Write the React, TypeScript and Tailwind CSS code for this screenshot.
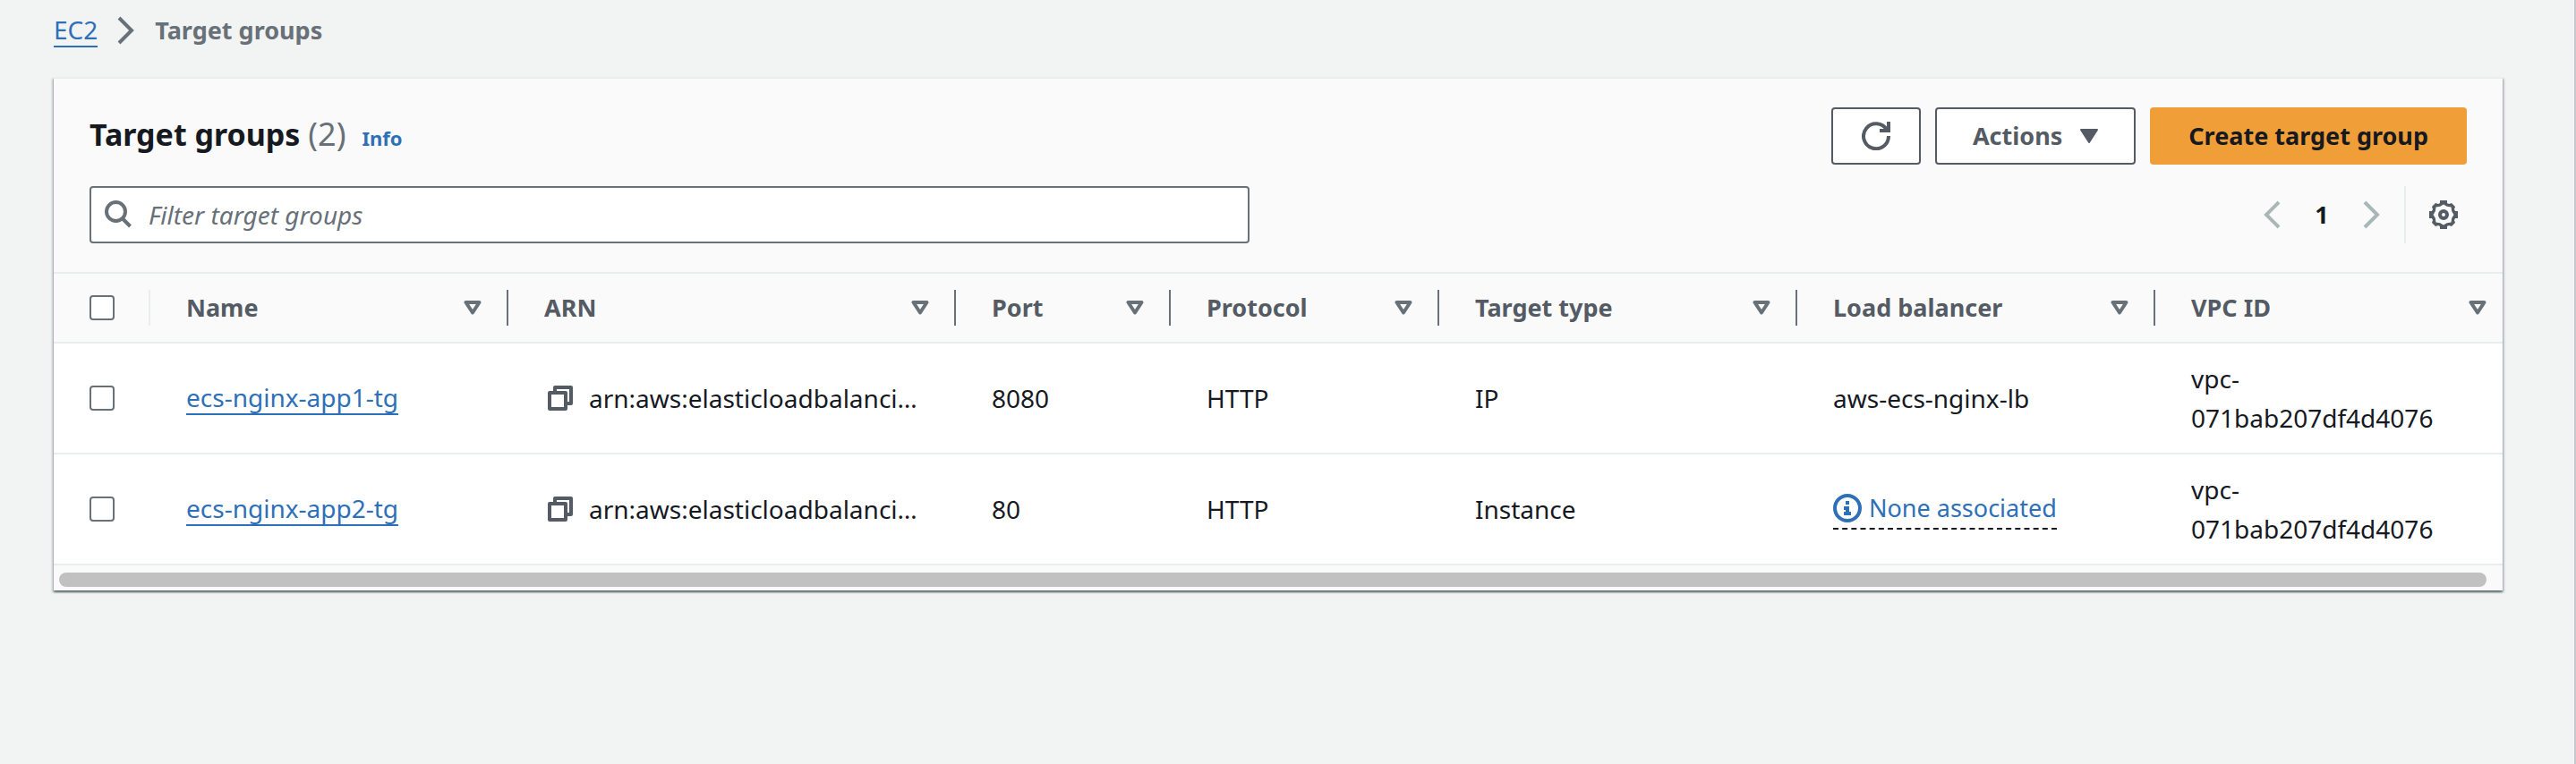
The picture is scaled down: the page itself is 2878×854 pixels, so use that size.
import React from "react";

type TargetGroup = {
  name: string;
  arn: string;
  port: number;
  protocol: string;
  targetType: string;
  loadBalancer: string | null;
  vpc: string;
};

const groups: TargetGroup[] = [
  {
    name: "ecs-nginx-app1-tg",
    arn: "arn:aws:elasticloadbalanci…",
    port: 8080,
    protocol: "HTTP",
    targetType: "IP",
    loadBalancer: "aws-ecs-nginx-lb",
    vpc: "vpc-071bab207df4d4076",
  },
  {
    name: "ecs-nginx-app2-tg",
    arn: "arn:aws:elasticloadbalanci…",
    port: 80,
    protocol: "HTTP",
    targetType: "Instance",
    loadBalancer: null,
    vpc: "vpc-071bab207df4d4076",
  },
];

const columns = ["Name", "ARN", "Port", "Protocol", "Target type", "Load balancer", "VPC ID"];

function Chevron({ left = false }: { left?: boolean }) {
  return (
    <svg viewBox="0 0 20 32" fill="none" stroke="currentColor" strokeWidth="4" className="h-8 w-5" aria-hidden="true">
      <path d={left ? "M18 2 4 16l14 14" : "M2 2l14 14L2 30"} />
    </svg>
  );
}

function SearchIcon() {
  return (
    <svg viewBox="0 0 32 32" fill="none" stroke="currentColor" strokeWidth="4" className="size-8" aria-hidden="true">
      <circle cx="13.500" cy="12.500" r="10.500" />
      <path d="M20.500 20l9 9" />
    </svg>
  );
}

function RefreshIcon() {
  return (
    <svg viewBox="0 0 32 32" fill="none" stroke="currentColor" strokeWidth="4" className="size-8" aria-hidden="true">
      <path d="M30 16A14 14 0 1 1 28 9" />
      <path d="M30 0v10H20" />
    </svg>
  );
}

function GearIcon() {
  return (
    <svg viewBox="0 0 32 32" fill="currentColor" fillRule="evenodd" className="size-8" aria-hidden="true">
      <path d="M12 0h8v3l2 1 3-1 4 4-1 3 1 2h3v8h-3l-1 2 1 3-4 4-3-1-2 1v3h-8v-3l-2-1-3 1-4-4 1-3-1-2H0v-8h3l1-2-1-3 4-4 3 1 2-1zM16 4.500l-3.800 2.300-4.700.7-.7 4.700L4.500 16l2.300 3.800.7 4.700 4.700.7L16 27.500l3.800-2.300 4.700-.7.7-4.700L27.500 16l-2.300-3.800-.7-4.700-4.700-.7z" />
      <path d="M16 10a6 6 0 1 0 0 12 6 6 0 0 0 0-12zm0 4a2 2 0 1 1 0 4 2 2 0 0 1 0-4z" />
    </svg>
  );
}

function CopyIcon() {
  return (
    <svg viewBox="0 0 28 28" fill="none" stroke="currentColor" strokeWidth="4" strokeLinejoin="round" className="size-7 shrink-0" aria-hidden="true">
      <path d="M2 8h18v18H2z" />
      <path d="M8 8V2h18v18h-6" />
    </svg>
  );
}

function InfoIcon() {
  return (
    <svg viewBox="0 0 32 32" className="size-8 shrink-0" aria-hidden="true">
      <circle cx="16" cy="16" r="14" fill="none" stroke="currentColor" strokeWidth="4" />
      <path fill="currentColor" d="M14 8h4v4h-4zM12 14h6v6h2v4h-8v-4h2v-2h-2z" />
    </svg>
  );
}

function SortIcon() {
  return (
    <svg viewBox="0 0 20 16" fill="none" stroke="currentColor" strokeWidth="4" strokeLinejoin="round" className="h-4 w-5" aria-hidden="true">
      <path d="M2.500 2h15L10 13.500z" />
    </svg>
  );
}

function Checkbox({ label }: { label: string }) {
  return (
    <input
      type="checkbox"
      aria-label={label}
      className="block size-7 appearance-none rounded-sm border-2 border-[#687078] bg-white checked:bg-[#2e70b8]"
    />
  );
}

export default function App() {
  return (
    <div className="min-h-screen border-r-2 border-[#c4c8ca] bg-[#f2f3f3] pr-20 pl-[60px] font-['Noto_Sans',sans-serif] text-[28px] leading-[44px] text-[#16191f]">
      <nav aria-label="Breadcrumb" className="pt-3 pb-[30px]">
        <ol className="flex items-center">
          <li className="flex items-center">
            <a href="#ec2" className="border-b-2 border-[#2e70b8] leading-[36px] text-[#2e70b8]">
              EC2
            </a>
            <span className="mx-[22px] text-[#687078]">
              <Chevron />
            </span>
          </li>
          <li className="text-[27px] font-bold text-[#687078]" aria-current="page">
            Target groups
          </li>
        </ol>
      </nav>

      <main className="border-t-2 border-[#eaeded] bg-[#fafafa] shadow-[0_2px_2px_0_rgba(0,28,36,0.5),2px_2px_2px_0_rgba(0,28,36,0.15),-2px_2px_2px_0_rgba(0,28,36,0.15)]">
        <header className="px-10 pt-8 pb-8">
          <div className="flex items-center justify-between">
            <div className="flex items-baseline">
              <h1 className="text-[34px] font-bold">
                Target groups <span className="text-4xl leading-[44px] font-normal text-[#687078]">(2)</span>
              </h1>
              <a href="#info" className="ml-[18px] text-[22px] font-bold text-[#2e70b8]">
                Info
              </a>
            </div>
            <div className="flex gap-4 text-[27px] font-bold text-[#545b64]">
              <button type="button" aria-label="Refresh" className="flex h-16 w-[100px] items-center justify-center rounded-sm border-2 border-[#545b64] bg-white">
                <RefreshIcon />
              </button>
              <button type="button" className="flex h-16 items-center gap-5 rounded-sm border-2 border-[#545b64] bg-white px-10">
                Actions
                <svg viewBox="0 0 20 16" fill="currentColor" stroke="currentColor" strokeWidth="2" strokeLinejoin="round" className="h-4 w-5" aria-hidden="true">
                  <path d="M1 1h18L10 15z" />
                </svg>
              </button>
              <button type="button" className="h-16 rounded-sm bg-[#f09f38] px-[43px] text-[#16191f]">
                Create target group
              </button>
            </div>
          </div>

          <div className="mt-6 flex items-center justify-between">
            <label className="flex h-16 w-[1296px] items-center gap-[18px] rounded-sm border-2 border-[#687078] bg-white px-[14px] text-[#687078]">
              <SearchIcon />
              <input
                type="text"
                aria-label="Filter target groups"
                placeholder="Filter target groups"
                className="min-w-0 flex-1 bg-transparent italic outline-none placeholder:text-[#687078]"
              />
            </label>
            <div className="flex items-center">
              <button type="button" aria-label="Previous page" className="text-[#aab7b8]">
                <Chevron left />
              </button>
              <button type="button" className="w-[92px] text-center text-[27px] font-bold">
                1
              </button>
              <button type="button" aria-label="Next page" className="text-[#aab7b8]">
                <Chevron />
              </button>
              <div className="ml-[26px] flex h-16 items-center border-l-2 border-[#eaeded] pr-2.5 pl-[26px]">
                <button type="button" aria-label="Preferences" className="text-[#545b64]">
                  <GearIcon />
                </button>
              </div>
            </div>
          </div>
        </header>

        <div className="overflow-hidden">
          <table className="w-[2748px] table-fixed border-collapse text-left">
            <colgroup>
              <col className="w-[108px]" />
              <col className="w-[400px]" />
              <col className="w-[500px]" />
              <col className="w-[240px]" />
              <col className="w-[300px]" />
              <col className="w-[400px]" />
              <col className="w-[400px]" />
              <col className="w-[400px]" />
            </colgroup>
            <thead className="border-y-2 border-[#eaeded] text-[27px] text-[#545b64]">
              <tr>
                <th className="h-[78px] p-0">
                  <div className="flex h-10 items-center border-r-2 border-[#eaeded] pl-10">
                    <Checkbox label="Select all target groups" />
                  </div>
                </th>
                {columns.map((c) => (
                  <th key={c} scope="col" className="group p-0 font-bold">
                    <div className="flex h-10 items-center justify-between border-r-2 border-[#687078] pr-7 pl-10 group-last:border-transparent">
                      {c}
                      <button type="button" aria-label={`Sort by ${c}`} className="text-[#687078]">
                        <SortIcon />
                      </button>
                    </div>
                  </th>
                ))}
              </tr>
            </thead>
            <tbody>
              {groups.map((g) => (
                <tr key={g.name} className="h-[124px] border-b-2 border-[#eaeded] bg-white">
                  <td className="p-0 pl-10">
                    <Checkbox label={`Select ${g.name}`} />
                  </td>
                  <td className="py-0 pr-7 pl-10">
                    <a href={`#${g.name}`} className="block w-fit border-b-2 border-[#2e70b8] leading-[36px] text-[#2e70b8]">
                      {g.name}
                    </a>
                  </td>
                  <td className="py-0 pr-7 pl-10">
                    <div className="flex items-center gap-[18px] pl-1">
                      <button type="button" aria-label={`Copy ARN of ${g.name}`} className="text-[#545b64]">
                        <CopyIcon />
                      </button>
                      <span className="whitespace-nowrap">{g.arn}</span>
                    </div>
                  </td>
                  <td className="py-0 pl-10">{g.port}</td>
                  <td className="py-0 pl-10">{g.protocol}</td>
                  <td className="py-0 pl-10">{g.targetType}</td>
                  <td className="py-0 pl-10">
                    {g.loadBalancer ?? (
                      <button type="button" className="flex items-center gap-2 border-b-2 border-dashed border-[#16191f] text-[27px] text-[#2e70b8]">
                        <InfoIcon />
                        None associated
                      </button>
                    )}
                  </td>
                  <td className="py-0 pr-10 pl-10">{g.vpc}</td>
                </tr>
              ))}
            </tbody>
          </table>
        </div>
        <div className="pt-2 pr-[18px] pb-1 pl-1.5">
          <div className="h-4 rounded-full bg-[#c1c1c1]" />
        </div>
      </main>
    </div>
  );
}
